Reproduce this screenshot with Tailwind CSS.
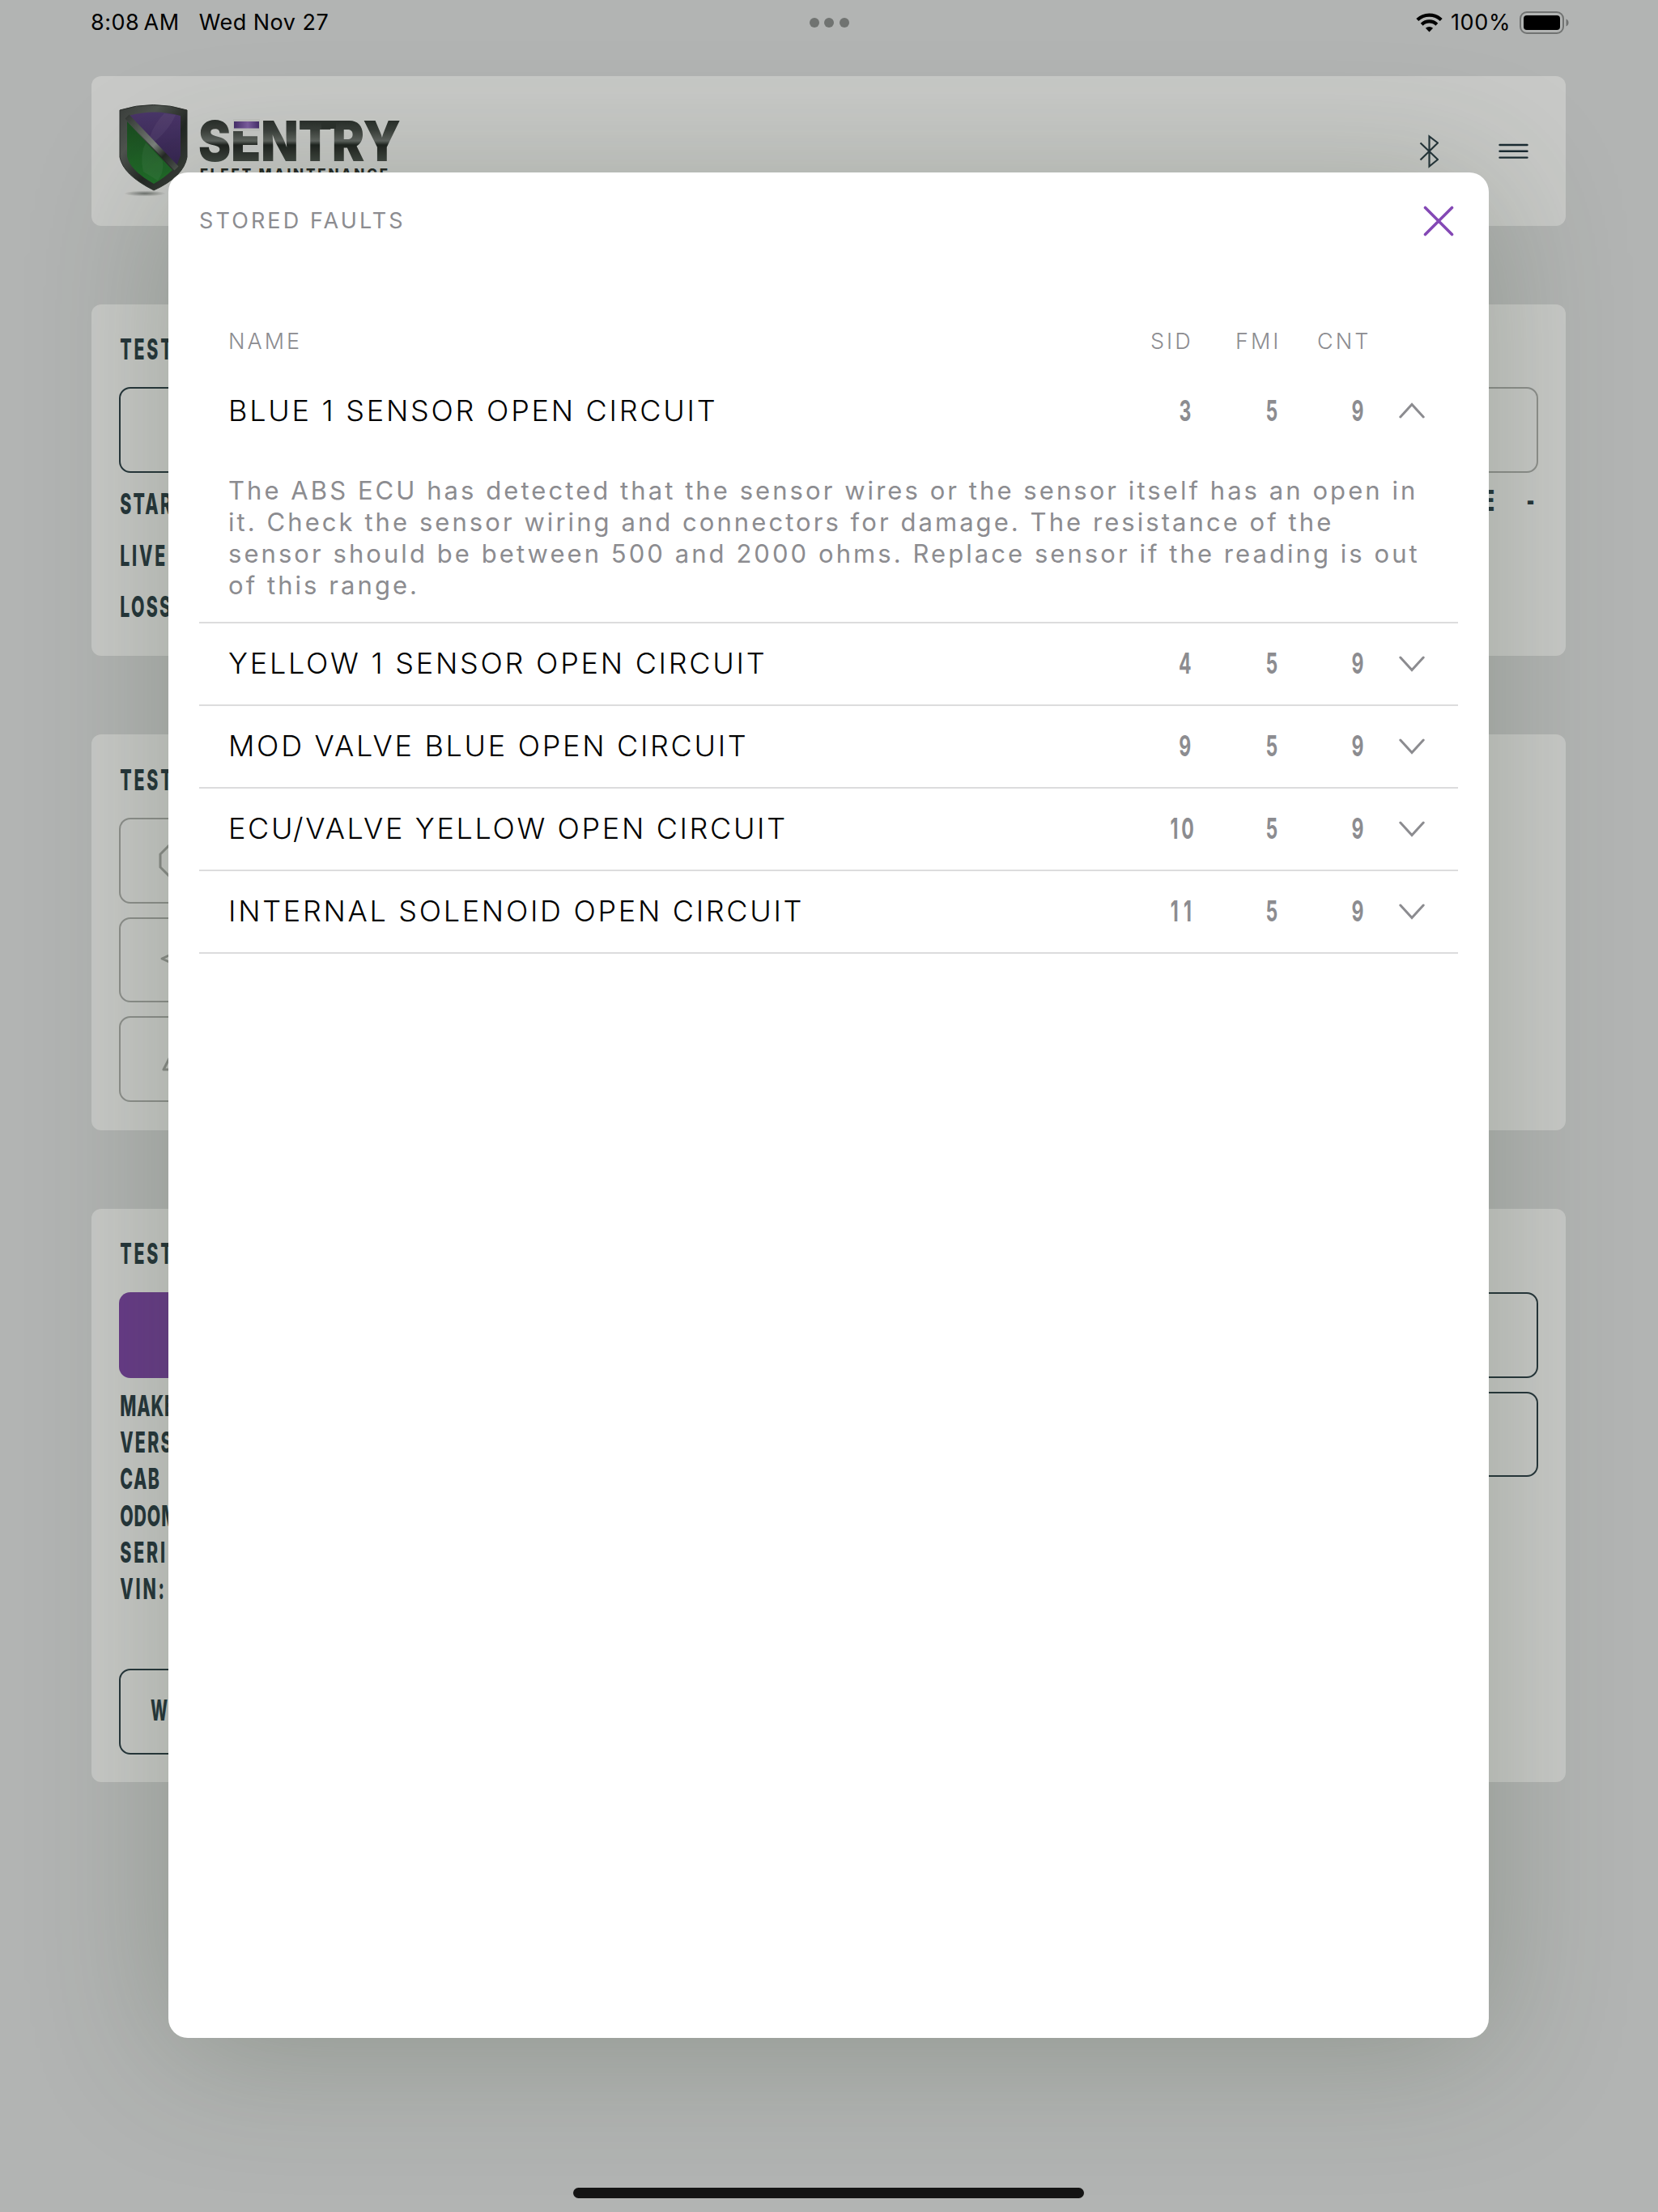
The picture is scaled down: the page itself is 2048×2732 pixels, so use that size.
<!DOCTYPE html>
<html lang="en">
  <head>
    <meta charset="UTF-8" />
    <title>Sentry Fleet Maintenance</title>
    <meta name="viewport" content="width=device-width, initial-scale=1.0" />
    <script src="https://cdn.jsdelivr.net/npm/@tailwindcss/browser@4"></script>
  </head>

  <body
    class="relative w-[2048px] h-[2732px] overflow-hidden bg-[#b2b4b3] text-[#24343a]"
    style="font-family: Inter, Roboto, 'Liberation Sans', sans-serif"
  >
    <!-- Status bar -->
    <header class="flex h-[94px] items-start justify-between pl-[112px] pr-[109px] pt-[11px] text-black">
      <div class="flex w-[600px] gap-[24px] text-[27px] leading-[34px]">
        <span id="clock" class="tracking-[0.5px]">8:08&thinsp;AM</span>
        <span id="date" class="tracking-[0.5px]">Wed Nov 27</span>
      </div>
      <div class="flex gap-[6.500px] pt-[11px]">
        <span class="size-3 rounded-full bg-[#707371]"></span>
        <span class="size-3 rounded-full bg-[#707371]"></span>
        <span class="size-3 rounded-full bg-[#707371]"></span>
      </div>
      <div class="flex h-[34px] w-[603px] items-center justify-end">
        <svg class="mr-[10px] h-[24px] w-[33px]" viewBox="0 0 33 24" fill="none" stroke="#000" stroke-width="4.2">
          <path d="M1.8 8.6a21 21 0 0 1 29.4 0" />
          <path d="M7.2 14.2a13.3 13.3 0 0 1 18.6 0" />
          <path d="M16.5 23.6l-4.6-4.8a6.6 6.6 0 0 1 9.2 0z" fill="#000" stroke="none" />
        </svg>
        <span id="charge" class="mr-[11px] text-[27px] tracking-[0.6px]">100%</span>
        <svg class="h-[28px] w-[62px]" viewBox="0 0 62 28" fill="none">
          <rect x="1" y="1" width="53" height="26" rx="8" stroke="#717372" stroke-width="2" />
          <rect x="5" y="5" width="45" height="18" rx="4" fill="#000" />
          <path d="M57.5 9.5c4 1.500 4 7.500 0 9z" fill="#717372" />
        </svg>
      </div>
    </header>

    <!-- Dashboard -->
    <main class="flex flex-col gap-[97px] pl-[113px] pr-[114px]">
      <section class="flex h-[185px] items-start justify-between rounded-xl bg-[#c8c9c7] pl-[34px] pr-[46px]">
        <svg class="mt-[34px] h-[120px] w-[350px]" viewBox="0 0 350 120">
          <defs>
            <linearGradient id="steel" x1="0" y1="0" x2="0" y2="1">
              <stop offset="0.15" stop-color="#232724" />
              <stop offset="0.35" stop-color="#3a3f3b" />
              <stop offset="0.5" stop-color="#5e635f" />
              <stop offset="0.56" stop-color="#1d211e" />
              <stop offset="0.85" stop-color="#444a45" />
            </linearGradient>
            <linearGradient id="rim" x1="0" y1="0" x2="1" y2="1">
              <stop offset="0" stop-color="#3a3e3b" />
              <stop offset="0.3" stop-color="#4e534f" />
              <stop offset="0.6" stop-color="#222623" />
              <stop offset="1" stop-color="#3f4440" />
            </linearGradient>
            <linearGradient id="violet" x1="0" y1="0" x2="0" y2="1">
              <stop offset="0" stop-color="#4a3569" />
              <stop offset="1" stop-color="#34234f" />
            </linearGradient>
            <linearGradient id="green" x1="0" y1="0" x2="0" y2="1">
              <stop offset="0" stop-color="#1b4a20" />
              <stop offset="1" stop-color="#1f6c28" />
            </linearGradient>
            <linearGradient id="glow">
              <stop offset="0" stop-color="#452d6b" />
              <stop offset="0.55" stop-color="#7c5da0" />
              <stop offset="1" stop-color="#452d6b" />
            </linearGradient>
            <linearGradient id="bar" gradientUnits="userSpaceOnUse" x1="10" y1="16" x2="71" y2="80">
              <stop offset="0" stop-color="#343935" />
              <stop offset="0.55" stop-color="#7b807c" />
              <stop offset="0.75" stop-color="#232724" />
              <stop offset="1" stop-color="#4c514d" />
            </linearGradient>
            <radialGradient id="ground">
              <stop offset="0" stop-color="#6d706d" />
              <stop offset="1" stop-color="#6d706d" stop-opacity="0" />
            </radialGradient>
          </defs>
          <ellipse cx="32" cy="111" rx="26" ry="3.500" fill="url(#ground)" />
          <path d="M1 8Q42 -5 84 8V66Q80 90 43 107Q5 88 1 66Z" fill="url(#rim)" stroke="#2b2f2c" stroke-width="1" />
          <path d="M12 15Q43 6 76 15V64L71 77Z" fill="url(#violet)" />
          <path d="M10 22L66 82Q57 91 43 99Q13 82 10 65Z" fill="url(#green)" />
          <path d="M56 12L70 14Q62 32 44 47L38 41Q44 24 56 12Z" fill="#fff" opacity="0.05" />
          <path d="M33 48L54 71Q56 84 48 95L30 84Q25 64 33 48Z" fill="#fff" opacity="0.05" />
          <path d="M10 16L71 80" stroke="url(#bar)" stroke-width="7" />
          <text x="98" y="71" font-size="69" font-weight="900" fill="url(#steel)" textLength="250" lengthAdjust="spacingAndGlyphs">SENTRY</text>
          <rect x="250" y="21" width="18" height="10" fill="#2b302c" />
          <rect x="141" y="19" width="33" height="15" fill="#c0c2bf" />
          <rect x="142" y="22" width="31" height="8.500" fill="url(#glow)" />
          <text x="100" y="93" font-size="17" font-weight="800" fill="#232724" textLength="232" lengthAdjust="spacing">FLEET MAINTENANCE</text>
        </svg>

        <div class="flex items-start gap-[74px] pt-[72px] pb-0">
          <svg class="h-[42px] w-[24px]" viewBox="0 0 24 42" fill="none" stroke="#24343a" stroke-width="2.200">
            <path d="M1.500 10.500L23 31L12.500 39.500V2.500L23 10.500L1.500 31.500" />
          </svg>
          <svg class="mt-[10px] h-[22px] w-[37px]" viewBox="0 0 37 22" stroke="#1a2b32" stroke-width="2.400" stroke-linecap="round">
            <path d="M1.500 3H35.500M1.500 10.800H35.500M1.500 18.600H35.500" />
          </svg>
        </div>
      </section>

      <section class="h-[434px] rounded-xl bg-[#c8c9c7] px-[34px] pt-[36px]">
        <h2 class="origin-left scale-x-[0.6] pl-[2px] text-[35.5px] leading-10 font-extrabold tracking-[4.800px]">TEST</h2>
        <div class="mt-[26px] grid grid-cols-2 gap-[17px]">
          <div class="h-[106px] rounded-[14px] border-2"></div>
          <div class="h-[106px] rounded-[14px] border-2 border-[#8d8f8c]"></div>
        </div>
        <div class="mt-[7px] flex justify-between">
          <ul class="origin-left scale-x-[0.6] pl-[2px] text-[35.5px] leading-[63.700px] font-extrabold tracking-[4.800px]">
            <li class="tracking-[3.800px]">STAR</li>
            <li>LIVE</li>
            <li class="tracking-[3.800px]">LOSS</li>
          </ul>
          <p class="flex origin-right scale-x-[0.6] gap-[66px] pr-[8px] text-[35.5px] leading-[56px] font-extrabold">
            <span>E</span><span>-</span>
          </p>
        </div>
      </section>

      <section class="h-[489px] rounded-xl bg-[#c8c9c7] px-[34px] pt-[37px]">
        <h2 class="origin-left scale-x-[0.6] pl-[2px] text-[35.5px] leading-10 font-extrabold tracking-[4.800px]">TEST</h2>
        <div class="mt-[26px] flex w-[850px] flex-col gap-[17px]">
          <div class="flex h-[105.500px] items-center rounded-[14px] border-2 border-[#8d8f8c] pl-[47px]">
            <svg class="size-[42px]" viewBox="0 0 42 42" fill="none" stroke="#8a8c89" stroke-width="3">
              <path d="M13 2H29L40 13V29L29 40H13L2 29V13Z" />
            </svg>
          </div>
          <div class="flex h-[105.500px] items-center rounded-[14px] border-2 border-[#8d8f8c] pb-[2px] pl-[49px]">
            <svg class="h-[24px] w-[36px]" viewBox="0 0 36 24" fill="none" stroke="#8a8c89" stroke-width="3" stroke-linejoin="round">
              <path d="M24 2L2 12L24 22" />
            </svg>
          </div>
          <div class="flex h-[105.500px] items-center rounded-[14px] border-2 border-[#8d8f8c] pb-[2px] pl-[50px]">
            <svg class="h-[40px] w-[44px]" viewBox="0 0 44 40" fill="none" stroke="#8a8c89" stroke-width="3" stroke-linejoin="round">
              <path d="M20 1L3 34H39Z" />
            </svg>
          </div>
        </div>
      </section>

      <section class="h-[708px] rounded-xl bg-[#c8c9c7] px-[34px] pt-[36px]">
        <h2 class="origin-left scale-x-[0.6] pl-[2px] text-[35.5px] leading-10 font-extrabold tracking-[4.800px]">TEST</h2>
        <div class="mt-[27px] grid grid-cols-2 gap-x-[17px]">
          <div>
            <div class="h-[105.500px] rounded-[14px] bg-[#673a88]"></div>
            <ul class="mt-[12.500px] origin-left scale-x-[0.6] pl-[2px] text-[35.5px] leading-[45.200px] font-extrabold tracking-[4.800px]">
              <li class="tracking-[1.500px]">MAKE</li>
              <li class="tracking-[3.800px]">VERS</li>
              <li class="tracking-[2.500px]">CAB</li>
              <li class="tracking-[1.500px]">ODOM</li>
              <li>SERI</li>
              <li>VIN:</li>
            </ul>
            <div class="mt-[76px] flex h-[106px] items-center rounded-[14px] border-2 pb-[4px] pl-[37px]">
              <span class="origin-left scale-x-[0.56] text-[35.5px] font-extrabold">W</span>
            </div>
          </div>
          <div class="flex flex-col gap-[17px]">
            <div class="h-[105.500px] rounded-[14px] border-2"></div>
            <div class="h-[105.500px] rounded-[14px] border-2"></div>
          </div>
        </div>
      </section>
    </main>

    <!-- Home indicator -->
    <div class="absolute bottom-[17px] left-[708px] h-[13px] w-[631px] rounded-full bg-[#151515]"></div>

    <!-- Stored faults modal -->
    <div
      class="absolute top-[213px] left-[208px] h-[2304px] w-[1631px] rounded-3xl bg-white px-[38px] text-[#8c8c90] shadow-[0_16px_170px_rgba(50,70,45,0.27)]"
    >
      <div class="flex h-[120px] items-center justify-between pr-[5px]">
        <h1 id="title" class="pt-px text-[27px] tracking-[3.100px]">STORED FAULTS</h1>
        <svg class="-mt-px size-[38px]" viewBox="0 0 38 38" stroke="#8448b5" stroke-width="3.600" stroke-linecap="round">
          <path d="M2.500 2.500L35.500 35.500M35.500 2.500L2.500 35.500" />
        </svg>
      </div>

      <div
        class="mt-[59px] grid h-[60px] grid-cols-[1fr_106px_107px_105px_31px] items-center pt-px pr-[42px] pl-[36px] text-[27px] font-light tracking-[3px]"
      >
        <span>NAME</span>
        <span class="pl-[11px]">SID</span>
        <span class="pl-[10px]">FMI</span>
        <span class="pl-[4px]">CNT</span>
      </div>

      <div class="mt-[5px] border-b-2 border-[#dcdcdd] pb-[26px]">
        <div class="grid h-[100px] grid-cols-[1fr_107px_107px_104px_31px] items-center pr-[42px] pl-[36px] text-center text-[36px]">
          <span class="text-left font-light tracking-[2.750px] text-black">BLUE 1 SENSOR OPEN CIRCUIT</span>
          <span class="scale-x-[0.64] pl-px font-bold">3</span>
          <span class="scale-x-[0.64] pl-px font-bold">5</span>
          <span class="scale-x-[0.64] pl-[3px] font-bold">9</span>
          <svg class="h-[20px] w-[32px]" viewBox="0 0 32 20" fill="none" stroke="#8c8c90" stroke-width="3" stroke-linecap="round">
            <path d="M1.800 18L16 2.500L30.200 18" />
          </svg>
        </div>
        <p class="mt-[29px] pl-[36px] text-[31px] leading-[39px] tracking-[3.060px] whitespace-nowrap">
          The ABS ECU has detected that the sensor wires or the sensor itself has an open in<br />
          it. Check the sensor wiring and connectors for damage. The resistance of the<br />
          sensor should be between 500 and 2000 ohms. Replace sensor if the reading is out<br />
          of this range.
        </p>
      </div>

      <div class="grid h-[102px] grid-cols-[1fr_107px_107px_104px_31px] items-center border-b-2 border-[#dcdcdd] pr-[42px] pb-[3px] pl-[36px] text-center text-[36px]">
        <span class="text-left font-light tracking-[2.750px] text-black">YELLOW 1 SENSOR OPEN CIRCUIT</span>
        <span class="scale-x-[0.64] pl-px font-bold">4</span>
        <span class="scale-x-[0.64] pl-px font-bold">5</span>
        <span class="scale-x-[0.64] pl-[3px] font-bold">9</span>
        <svg class="mt-[3px] h-[20px] w-[32px]" viewBox="0 0 32 20" fill="none" stroke="#8c8c90" stroke-width="3" stroke-linecap="round">
          <path d="M1.800 2L16 17.500L30.200 2" />
        </svg>
      </div>

      <div class="grid h-[102px] grid-cols-[1fr_107px_107px_104px_31px] items-center border-b-2 border-[#dcdcdd] pr-[42px] pb-[3px] pl-[36px] text-center text-[36px]">
        <span class="text-left font-light tracking-[2.700px] text-black">MOD VALVE BLUE OPEN CIRCUIT</span>
        <span class="scale-x-[0.64] pl-px font-bold">9</span>
        <span class="scale-x-[0.64] pl-px font-bold">5</span>
        <span class="scale-x-[0.64] pl-[3px] font-bold">9</span>
        <svg class="mt-[3px] h-[20px] w-[32px]" viewBox="0 0 32 20" fill="none" stroke="#8c8c90" stroke-width="3" stroke-linecap="round">
          <path d="M1.800 2L16 17.500L30.200 2" />
        </svg>
      </div>

      <div class="grid h-[102px] grid-cols-[1fr_107px_107px_104px_31px] items-center border-b-2 border-[#dcdcdd] pr-[42px] pb-[3px] pl-[36px] text-center text-[36px]">
        <span class="text-left font-light tracking-[2.650px] text-black">ECU/VALVE YELLOW OPEN CIRCUIT</span>
        <span class="-ml-[3px] scale-x-[0.64] font-bold tracking-[6px]">10</span>
        <span class="scale-x-[0.64] pl-px font-bold">5</span>
        <span class="scale-x-[0.64] pl-[3px] font-bold">9</span>
        <svg class="mt-[3px] h-[20px] w-[32px]" viewBox="0 0 32 20" fill="none" stroke="#8c8c90" stroke-width="3" stroke-linecap="round">
          <path d="M1.800 2L16 17.500L30.200 2" />
        </svg>
      </div>

      <div class="grid h-[102px] grid-cols-[1fr_107px_107px_104px_31px] items-center border-b-2 border-[#dcdcdd] pr-[42px] pb-[3px] pl-[36px] text-center text-[36px]">
        <span class="text-left font-light tracking-[2.700px] text-black">INTERNAL SOLENOID OPEN CIRCUIT</span>
        <span class="-ml-[3px] scale-x-[0.64] font-bold tracking-[10px]">11</span>
        <span class="scale-x-[0.64] pl-px font-bold">5</span>
        <span class="scale-x-[0.64] pl-[3px] font-bold">9</span>
        <svg class="mt-[3px] h-[20px] w-[32px]" viewBox="0 0 32 20" fill="none" stroke="#8c8c90" stroke-width="3" stroke-linecap="round">
          <path d="M1.800 2L16 17.500L30.200 2" />
        </svg>
      </div>
    </div>
  </body>
</html>
